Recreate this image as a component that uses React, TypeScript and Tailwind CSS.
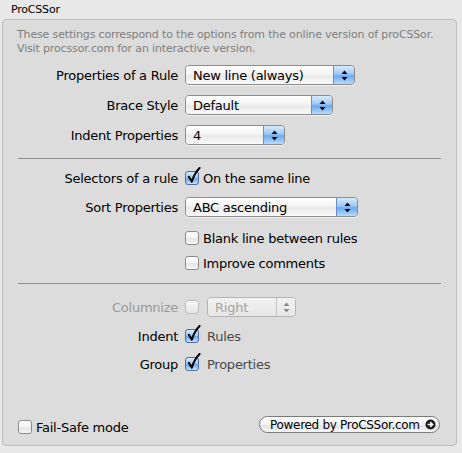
import React from "react";

function Arrows({ color = "#000" }: { color?: string }) {
  return (
    <svg width="7" height="11" viewBox="0 0 7 11">
      <path d="M3.5 0.5 L6.5 4 L0.5 4 Z" fill={color} />
      <path d="M3.5 10.5 L6.5 7 L0.5 7 Z" fill={color} />
    </svg>
  );
}

function Popup({ text, width }: { text: string; width: number }) {
  return (
    <div
      className="relative h-[20px] flex rounded-[4px] border border-[#8c8c8c] overflow-hidden shadow-[0_1px_0_rgba(255,255,255,0.6)]"
      style={{ width }}
    >
      <div className="flex-1 flex items-center pl-[7px] bg-[linear-gradient(#ffffff_0%,#f4f4f4_45%,#e9e9e9_55%,#fafafa_100%)] text-[13px] tracking-[-0.25px] leading-none whitespace-nowrap">
        {text}
      </div>
      <div className="w-[21px] flex items-center justify-center border-l border-[#6b8fc4] bg-[linear-gradient(#d8ebfc_0%,#9cc8f4_45%,#6aaaf0_55%,#b7dcfb_100%)]">
        <Arrows />
      </div>
    </div>
  );
}

function DisabledPopup({ text, width }: { text: string; width: number }) {
  return (
    <div
      className="relative h-[20px] flex rounded-[4px] border border-[#b4b4b4] overflow-hidden"
      style={{ width }}
    >
      <div className="flex-1 flex items-center pl-[7px] bg-[linear-gradient(#f2f2f2,#e6e6e6)] text-[13px] tracking-[-0.25px] leading-none text-[#a3a3a3]">
        {text}
      </div>
      <div className="w-[19px] flex items-center justify-center border-l border-[#c4c4c4] bg-[linear-gradient(#f2f2f2,#e6e6e6)]">
        <Arrows color="#8a8a8a" />
      </div>
    </div>
  );
}

function Checkbox({ checked, disabled }: { checked?: boolean; disabled?: boolean }) {
  return (
    <div className="relative w-[14px] h-[14px] shrink-0">
      <div
        className={
          checked
            ? "w-[14px] h-[14px] rounded-[3px] border border-[#4f6fa3] bg-[linear-gradient(#dbeafc_0%,#9fcaf4_45%,#6aa6ea_55%,#c6e3fd_100%)]"
            : disabled
            ? "w-[14px] h-[14px] rounded-[3px] border border-[#bdbdbd] bg-[linear-gradient(#f6f6f6,#e6e6e6)]"
            : "w-[14px] h-[14px] rounded-[3px] border border-[#8c8c8c] bg-[linear-gradient(#ffffff_0%,#f3f3f3_50%,#e5e5e5_55%,#f7f7f7_100%)]"
        }
      />
      {checked && (
        <svg className="absolute left-[1px] top-[-4px]" width="15" height="17" viewBox="0 0 15 17">
          <path d="M2.8 9.8 L5.8 14.6 C7.4 9.5 9.8 4.8 13.6 1" stroke="#000" strokeWidth="2" fill="none" strokeLinejoin="round" strokeLinecap="round" />
        </svg>
      )}
    </div>
  );
}

function Row({ label, children, className = "", labelClass = "" }: { label: string; children: React.ReactNode; className?: string; labelClass?: string }) {
  return (
    <div className={"flex items-center h-[20px] " + className}>
      <div className={"w-[175px] text-right text-[13px] tracking-[-0.25px] leading-none whitespace-nowrap " + labelClass}>{label}</div>
      <div className="ml-[7px] flex items-center">{children}</div>
    </div>
  );
}

function CheckRow({ checked, text, className = "", textClass = "" }: { checked?: boolean; text: string; className?: string; textClass?: string }) {
  return (
    <div className={"flex items-center h-[20px] pl-[182px] " + className}>
      <Checkbox checked={checked} />
      <span className={"ml-[4px] text-[13px] tracking-[-0.25px] leading-none whitespace-nowrap " + textClass}>{text}</span>
    </div>
  );
}

export default function App() {
  return (
    <div className="w-[462px] h-[453px] bg-[#e8e8e8] text-black font-['DejaVu_Sans',sans-serif] overflow-hidden">
      <div className="h-[19px] pl-[11px] pt-[3px] text-[11px] leading-[13px] tracking-[-0.2px]">ProCSSor</div>
      <div className="ml-[2px] w-[455px] h-[427px] rounded-[4px] border border-[#bdbdbd] bg-[#dcdcdc] flex flex-col">
        <div className="pl-[14px] pt-[8px] text-[11px] leading-[14px] tracking-[-0.15px] text-[#7e7e7e] whitespace-nowrap">
          <div>These settings correspond to the options from the online version of proCSSor.</div>
          <div>Visit procssor.com for an interactive version.</div>
        </div>

        <Row label="Properties of a Rule" className="mt-[9px]">
          <Popup text="New line (always)" width={170} />
        </Row>
        <Row label="Brace Style" className="mt-[10px]">
          <Popup text="Default" width={148} />
        </Row>
        <Row label="Indent Properties" className="mt-[10px]">
          <Popup text="4" width={100} />
        </Row>

        <div className="mt-[13px] mx-[15px] h-px bg-[#8f8f8f]" />

        <Row label="Selectors of a rule" className="mt-[9px]">
          <Checkbox checked />
          <span className="ml-[4px] text-[13px] tracking-[-0.25px] leading-none whitespace-nowrap">On the same line</span>
        </Row>
        <Row label="Sort Properties" className="mt-[9px]">
          <Popup text="ABC ascending" width={173} />
        </Row>
        <CheckRow text="Blank line between rules" className="mt-[11px]" />
        <CheckRow text="Improve comments" className="mt-[5px]" />

        <div className="mt-[10px] mx-[15px] h-px bg-[#8f8f8f]" />

        <Row label="Columnize" className="mt-[13px]" labelClass="text-[#9a9a9a]">
          <Checkbox disabled />
          <div className="ml-[8px]">
            <DisabledPopup text="Right" width={89} />
          </div>
        </Row>
        <Row label="Indent" className="mt-[9px]">
          <Checkbox checked />
          <span className="ml-[8px] text-[13px] tracking-[-0.25px] leading-none text-[#4a4a4a]">Rules</span>
        </Row>
        <Row label="Group" className="mt-[8px]">
          <Checkbox checked />
          <span className="ml-[8px] text-[13px] tracking-[-0.25px] leading-none text-[#4a4a4a]">Properties</span>
        </Row>

        <div className="mt-auto mb-[8px] flex items-start justify-between pl-[15px] pr-[16px]">
          <div className="flex items-center mt-[1px] h-[20px]">
            <Checkbox />
            <span className="ml-[4px] text-[13px] tracking-[-0.25px] leading-none whitespace-nowrap">Fail-Safe mode</span>
          </div>
          <div className="h-[17px] w-[181px] rounded-full border border-[#7a7a7a] bg-[linear-gradient(#ffffff_0%,#f2f2f2_50%,#e4e4e4_55%,#f5f5f5_100%)] flex items-center pl-[10px] text-[12px] tracking-[-0.3px] leading-none whitespace-nowrap">
            <span>Powered by ProCSSor.com</span>
            <svg className="ml-[5px] shrink-0" width="11" height="11" viewBox="0 0 11 11">
              <circle cx="5.5" cy="5.5" r="5" fill="#1a1a1a" />
              <path d="M2.6 5.5 H7 M5.2 3.2 L7.6 5.5 L5.2 7.8" stroke="#fff" strokeWidth="1.6" fill="none" />
            </svg>
          </div>
        </div>
      </div>
    </div>
  );
}
